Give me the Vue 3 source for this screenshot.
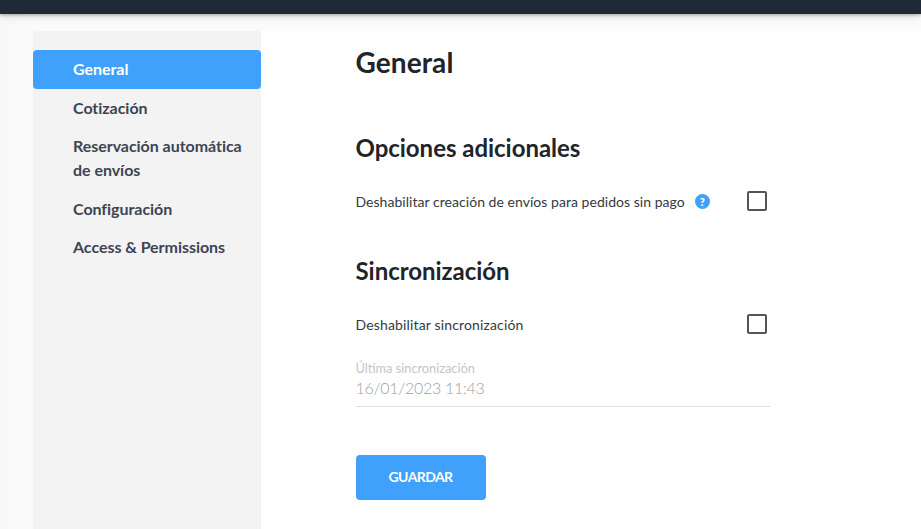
<script setup>
const items = [
  { label: 'General', active: true },
  { label: 'Cotización' },
  { label: 'Reservación automática de envíos' },
  { label: 'Configuración' },
  { label: 'Access & Permissions' },
]
</script>

<template>
  <div class="page">
    <header class="topbar"></header>
    <div class="body">
      <nav class="sidebar">
        <a v-for="item in items" :key="item.label" class="nav-item" :class="{ active: item.active }">{{ item.label }}</a>
      </nav>
      <main class="content">
        <h1>General</h1>
        <h2 class="first">Opciones adicionales</h2>
        <div class="row">
          <span class="label">Deshabilitar creación de envíos para pedidos sin pago</span>
          <span class="help">?</span>
          <span class="check"></span>
        </div>
        <h2 class="second">Sincronización</h2>
        <div class="row row2">
          <span class="label">Deshabilitar sincronización</span>
          <span class="check"></span>
        </div>
        <div class="field">
          <div class="field-label">Última sincronización</div>
          <div class="field-value">16/01/2023 11:43</div>
        </div>
        <button class="save">GUARDAR</button>
      </main>
    </div>
  </div>
</template>

<style>
html, body { margin: 0; height: 100%; overflow: hidden; background: #fff; }
</style>

<style scoped>
.page { width: 921px; height: 529px; display: flex; flex-direction: column; font-family: Lato, sans-serif; color: #212529; overflow: hidden; }
.topbar { height: 14px; flex: none; background: #1f2a36; box-shadow: 0 1px 3px rgba(0,0,0,.3), 0 2px 10px rgba(0,0,0,.12); position: relative; z-index: 1; }
.body { flex: 1; display: flex; padding: 17px 0 0 33px; background: linear-gradient(90deg, #f8f8f8, #fbfbfb 33px); }
.sidebar { width: 228px; flex: none; background: #f3f3f3; border-radius: 4px 0 0 0; padding-top: 19px; box-sizing: border-box; }
.nav-item { display: block; box-sizing: border-box; padding: 7px 12px 7.5px 40px; font-size: 16px; line-height: 24px; font-weight: 700; letter-spacing: -0.04px; color: #3d4552; border-radius: 4px; }
.nav-item.active { background: #3fa1fb; color: #fff; }
.content { flex: 1; background: #fff; padding: 0 150px 0 94.5px; }
h1 { margin: 13px 0 0; font-size: 28px; line-height: 36px; font-weight: 700; letter-spacing: 0.1px; color: #212529; }
h2 { margin: 0; font-size: 24px; line-height: 30px; font-weight: 700; letter-spacing: -0.03px; color: #212529; }
h2.first { margin-top: 53px; }
h2.second { margin-top: 41px; }
.row { display: flex; align-items: center; height: 28px; margin-top: 24px; font-size: 14px; letter-spacing: 0.04px; color: #343a40; padding-right: 4px; }
.row2 { margin-top: 24px; letter-spacing: 0.15px; }
.help { width: 15px; height: 15px; border-radius: 50%; background: #3fa1fb; color: #fff; font-size: 11px; font-weight: 900; line-height: 15px; text-align: center; margin-left: 10px; }
.check { border: 2px solid #555; border-radius: 2px; background: #fff; margin-left: auto; box-sizing: content-box; width: 16px; height: 16px; }
.field { margin-top: 22px; height: 46px; border-bottom: 1px solid #dee2e6; box-sizing: content-box; }
.field-label { font-size: 12.75px; line-height: 16px; color: #c2c6ca; }
.field-value { font-size: 16px; line-height: 23px; font-weight: 300; letter-spacing: -0.27px; color: #9ea2a6; }
.save { display: block; margin-top: 48px; width: 130px; height: 45px; padding: 0 0 2px; border: 0; border-radius: 4px; background: #3fa1fb; color: #fff; font: 700 14px Lato, sans-serif; letter-spacing: -0.6px; }
</style>
